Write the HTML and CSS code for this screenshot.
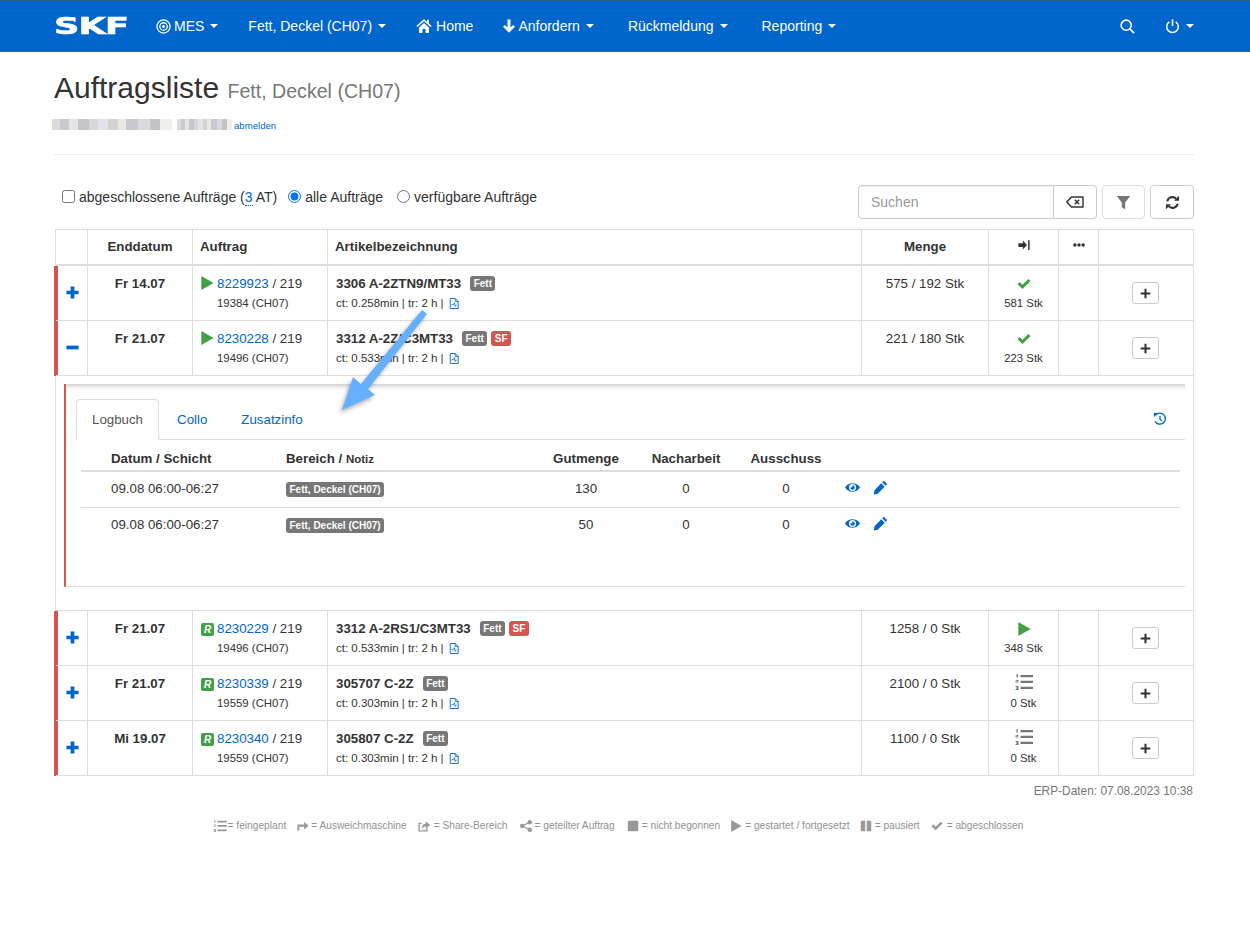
FILE: index.html
```html
<!DOCTYPE html>
<html lang="de">
<head>
    <meta charset="UTF-8">
    <title>Auftragsliste</title>
    <link rel="stylesheet" href="styles.css">
</head>
<body>
    <svg class="icon-defs" width="0" height="0">
        <symbol id="i-target" viewBox="0 0 16 16"><circle cx="8" cy="8" r="7" fill="none" stroke="currentColor" stroke-width="1.4"/><circle cx="8" cy="8" r="4" fill="none" stroke="currentColor" stroke-width="1.4"/><circle cx="8" cy="8" r="1.6" fill="currentColor"/></symbol>
        <symbol id="i-home" viewBox="0 0 16 16"><path d="M8 1 .3 8l1 1.1L8 3.2l6.7 5.9 1-1.1-2.7-2.4V1.800h-2v2.100z"/><path d="M3 9.400 8 5l5 4.400V15H9.500v-4h-3v4H3z"/></symbol>
        <symbol id="i-down" viewBox="0 0 12 14"><path d="M4.500 .5h3v8l2.600-2.600L12 7.800 6 13.800 0 7.800l1.900-1.900L4.500 8.500z"/></symbol>
        <symbol id="i-search" viewBox="0 0 16 16"><circle cx="6.600" cy="6.600" r="5.400" fill="none" stroke="currentColor" stroke-width="1.700"/><path d="M10.500 10.500 15 15" fill="none" stroke="currentColor" stroke-width="2"/></symbol>
        <symbol id="i-power" viewBox="0 0 16 16"><path d="M4.600 3A6.200 6.200 0 1 0 11.400 3" fill="none" stroke="currentColor" stroke-width="1.600"/><path d="M8 .5v7" fill="none" stroke="currentColor" stroke-width="1.700"/></symbol>
        <symbol id="i-filter" viewBox="0 0 16 16"><path d="M.8 1h14.400L9.800 8v7.500L6.200 13V8z"/></symbol>
        <symbol id="i-refresh" viewBox="0 0 16 16"><path d="M2.400 6.600A5.800 5.800 0 0 1 12 3.900" fill="none" stroke="currentColor" stroke-width="2.200"/><path d="M9.600 6.200H15V.8z"/><path d="M13.600 9.400A5.800 5.800 0 0 1 4 12.100" fill="none" stroke="currentColor" stroke-width="2.200"/><path d="M6.400 9.800H1v5.400z"/></symbol>
        <symbol id="i-clear" viewBox="0 0 18 14"><path d="M5.500 2h11.500v10H5.500L.8 7z" fill="none" stroke="currentColor" stroke-width="1.400"/><path d="m8.800 4.800 4.400 4.400m0-4.400-4.400 4.400" fill="none" stroke="currentColor" stroke-width="1.500"/></symbol>
        <symbol id="i-login" viewBox="0 0 16 16"><path d="M.5 5.500h6V2L12 8l-5.500 6v-3.500h-6z"/><path d="M13.500 1.500h2v13h-2z"/></symbol>
        <symbol id="i-dots" viewBox="0 0 16 16"><circle cx="2.500" cy="8" r="2.300"/><circle cx="8" cy="8" r="2.300"/><circle cx="13.500" cy="8" r="2.300"/></symbol>
        <symbol id="i-plus" viewBox="0 0 16 16"><path d="M5.700 .5h4.600v5.200h5.200v4.600h-5.200v5.200H5.700v-5.200H.5V5.700h5.200z"/></symbol>
        <symbol id="i-plus-thin" viewBox="0 0 16 16"><path d="M6.500 1h3v5.500H15v3H9.500V15h-3V9.500H1v-3h5.500z"/></symbol>
        <symbol id="i-minus" viewBox="0 0 16 16"><path d="M.5 5.700h15v4.600H.5z"/></symbol>
        <symbol id="i-play" viewBox="0 0 16 16"><path d="M1.500 0 15.500 8l-14 8z"/></symbol>
        <symbol id="i-check" viewBox="0 0 16 16"><path d="M.6 8.200 3 5.800l3.200 3.100L13 2.400l2.400 2.400L6.200 13.800z"/></symbol>
        <symbol id="i-list" viewBox="0 0 18 16"><path d="M5.500 1h12.500v2.300H5.500zM5.500 6.800h12.500v2.300H5.500zM5.500 12.700h12.500V15H5.500z"/><path d="M1.500 0h1.300v3.500H1.500zM.5 6h3v1H1.800v.6h1.700v1H.5V7.200h1.700v-.4H.5zM.5 12h3v4h-3v-1h1.700v-.5H1v-.9h1.200V13H.5z"/></symbol>
        <symbol id="i-eye" viewBox="0 0 16 16"><path fill-rule="evenodd" d="M0 8c3.500-6 12.500-6 16 0-3.500 6-12.500 6-16 0zm8-3.800a3.800 3.800 0 1 0 0 7.600 3.800 3.800 0 0 0 0-7.600z"/><path d="M8 5.600a2.400 2.400 0 1 1-2.400 2.400c1 .4 2.800-.6 2.400-2.400z"/></symbol>
        <symbol id="i-pencil" viewBox="0 0 16 16"><path d="M11.500.8 15.200 4.500 13.500 6.200 9.800 2.500zM8.800 3.500l3.700 3.700-7.500 7.500L.8 15.500l.8-4.500z"/></symbol>
        <symbol id="i-history" viewBox="0 0 16 16"><path d="M3 3.600A6.300 6.300 0 1 1 2.300 10.500" fill="none" stroke="currentColor" stroke-width="1.500"/><path d="M.8 1.200 5.600 1.200 1.200 5.800z"/><path d="M8 4.500v4l2.500 1.500" fill="none" stroke="currentColor" stroke-width="1.500"/></symbol>
        <symbol id="i-doc" viewBox="0 0 12 14"><path d="M1.500 1h6l3.500 3.500v8.500H1.500z" fill="none" stroke="currentColor" stroke-width="1.100"/><path d="M7.500 1v3.500H11M3 8.500h2l1.500-2.500 1 4.500L9 8.500" fill="none" stroke="currentColor"/></symbol>
        <symbol id="i-reroute" viewBox="0 0 16 16"><path d="M.5 14V6h9V2.500L15.500 7.500 9.500 12.500V9H3v5z"/></symbol>
        <symbol id="i-sharebox" viewBox="0 0 16 16"><path d="M12 11v3.500H1.500V4.500H5" fill="none" stroke="currentColor" stroke-width="1.800"/><path d="M5 11c0-4 2-6 5.500-6V1.500L16 6.500l-5.500 5V8.500C8 8.500 6.500 9 5 11z"/></symbol>
        <symbol id="i-sharealt" viewBox="0 0 16 16"><circle cx="3" cy="8" r="3"/><circle cx="13" cy="3" r="3"/><circle cx="13" cy="13" r="3"/><path d="M3 8 13 3M3 8l10 5" fill="none" stroke="currentColor" stroke-width="1.500"/></symbol>
        <symbol id="i-stop" viewBox="0 0 16 16"><rect x="1" y="1" width="14" height="14" rx="1.500"/></symbol>
        <symbol id="i-pause" viewBox="0 0 16 16"><rect x="1" y="1" width="6" height="14" rx="1"/><rect x="9" y="1" width="6" height="14" rx="1"/></symbol>
    </svg>

    <nav class="navbar">
        <span class="brand">SKF</span>
        <ul class="nav-list">
            <li class="nav-item"><svg class="nav-icon nav-icon-target"><use href="#i-target"/></svg>MES<span class="caret"></span></li>
            <li class="nav-item">Fett, Deckel (CH07)<span class="caret"></span></li>
            <li class="nav-item"><svg class="nav-icon nav-icon-home"><use href="#i-home"/></svg>Home</li>
            <li class="nav-item"><svg class="nav-icon nav-icon-down"><use href="#i-down"/></svg>Anfordern<span class="caret"></span></li>
            <li class="nav-item nav-item-wide">Rückmeldung<span class="caret"></span></li>
            <li class="nav-item nav-item-wide">Reporting<span class="caret"></span></li>
        </ul>
        <ul class="nav-list nav-right">
            <li class="nav-item"><svg class="nav-icon nav-icon-solo"><use href="#i-search"/></svg></li>
            <li class="nav-item"><svg class="nav-icon nav-icon-solo"><use href="#i-power"/></svg><span class="caret"></span></li>
        </ul>
    </nav>

    <main class="container">
        <h1 class="page-title">Auftragsliste <small>Fett, Deckel (CH07)</small></h1>
        <div class="user-line">
            <span class="blurred blurred-a"></span><span class="blurred blurred-b"></span>
            <a class="logout" href="#">abmelden</a>
        </div>
        <hr class="divider">

        <div class="toolbar">
            <form class="filters">
                <label class="filter"><input type="checkbox"><span>abgeschlossene Aufträge (<abbr class="at-count">3</abbr> AT)</span></label>
                <label class="filter"><input type="radio" name="scope" checked><span>alle Aufträge</span></label>
                <label class="filter filter-last"><input type="radio" name="scope"><span>verfügbare Aufträge</span></label>
            </form>
            <div class="tools">
                <div class="search-group">
                    <input class="search-input" type="text" placeholder="Suchen">
                    <button class="btn btn-clear" type="button"><svg class="icon-clear"><use href="#i-clear"/></svg></button>
                </div>
                <button class="btn btn-tool btn-filter" type="button"><svg class="icon-15"><use href="#i-filter"/></svg></button>
                <button class="btn btn-tool" type="button"><svg class="icon-15"><use href="#i-refresh"/></svg></button>
            </div>
        </div>

        <table class="orders">
            <colgroup>
                <col class="c-toggle"><col class="c-date"><col class="c-order"><col class="c-article"><col class="c-qty"><col class="c-state"><col class="c-more"><col class="c-add">
            </colgroup>
            <thead>
                <tr>
                    <th></th>
                    <th>Enddatum</th>
                    <th class="left">Auftrag</th>
                    <th class="left">Artikelbezeichnung</th>
                    <th>Menge</th>
                    <th><svg class="icon-12"><use href="#i-login"/></svg></th>
                    <th><svg class="icon-12"><use href="#i-dots"/></svg></th>
                    <th></th>
                </tr>
            </thead>
            <tbody>
                <tr>
                    <td class="toggle"><svg class="icon-toggle"><use href="#i-plus"/></svg></td>
                    <td class="date">Fr 14.07</td>
                    <td class="order"><svg class="icon-play"><use href="#i-play"/></svg><a href="#">8229923</a> / 219<div class="sub">19384 (CH07)</div></td>
                    <td class="article"><b>3306 A-2ZTN9/MT33</b><span class="label label-grey">Fett</span><div class="meta">ct: 0.258min | tr: 2 h | <svg class="icon-doc"><use href="#i-doc"/></svg></div></td>
                    <td class="qty">575 / 192 Stk</td>
                    <td class="state"><svg class="icon-check"><use href="#i-check"/></svg><div class="sub">581 Stk</div></td>
                    <td></td>
                    <td class="add"><button class="btn btn-add" type="button"><svg class="icon-11"><use href="#i-plus-thin"/></svg></button></td>
                </tr>
                <tr>
                    <td class="toggle"><svg class="icon-toggle"><use href="#i-minus"/></svg></td>
                    <td class="date">Fr 21.07</td>
                    <td class="order"><svg class="icon-play"><use href="#i-play"/></svg><a href="#">8230228</a> / 219<div class="sub">19496 (CH07)</div></td>
                    <td class="article"><b>3312 A-2Z/C3MT33</b><span class="label label-grey">Fett</span><span class="label label-red">SF</span><div class="meta">ct: 0.533min | tr: 2 h | <svg class="icon-doc"><use href="#i-doc"/></svg></div></td>
                    <td class="qty">221 / 180 Stk</td>
                    <td class="state"><svg class="icon-check"><use href="#i-check"/></svg><div class="sub">223 Stk</div></td>
                    <td></td>
                    <td class="add"><button class="btn btn-add" type="button"><svg class="icon-11"><use href="#i-plus-thin"/></svg></button></td>
                </tr>
                <tr class="detail-row">
                    <td colspan="8">
                        <div class="detail">
                            <div class="tabs">
                                <a class="tab tab-active" href="#">Logbuch</a>
                                <a class="tab" href="#">Collo</a>
                                <a class="tab" href="#">Zusatzinfo</a>
                                <svg class="icon-history"><use href="#i-history"/></svg>
                            </div>
                            <table class="log">
                                <colgroup>
                                    <col class="l-date"><col class="l-area"><col class="l-num"><col class="l-num"><col class="l-num"><col>
                                </colgroup>
                                <thead>
                                    <tr>
                                        <th class="log-date">Datum / Schicht</th>
                                        <th class="left">Bereich / <span class="note">Notiz</span></th>
                                        <th>Gutmenge</th>
                                        <th>Nacharbeit</th>
                                        <th>Ausschuss</th>
                                        <th></th>
                                    </tr>
                                </thead>
                                <tbody>
                                    <tr>
                                        <td class="log-date">09.08 06:00-06:27</td>
                                        <td><span class="label label-grey label-area">Fett, Deckel (CH07)</span></td>
                                        <td class="num">130</td>
                                        <td class="num">0</td>
                                        <td class="num">0</td>
                                        <td class="actions"><svg class="icon-15"><use href="#i-eye"/></svg><svg class="icon-15"><use href="#i-pencil"/></svg></td>
                                    </tr>
                                    <tr>
                                        <td class="log-date">09.08 06:00-06:27</td>
                                        <td><span class="label label-grey label-area">Fett, Deckel (CH07)</span></td>
                                        <td class="num">50</td>
                                        <td class="num">0</td>
                                        <td class="num">0</td>
                                        <td class="actions"><svg class="icon-15"><use href="#i-eye"/></svg><svg class="icon-15"><use href="#i-pencil"/></svg></td>
                                    </tr>
                                </tbody>
                            </table>
                        </div>
                    </td>
                </tr>
                <tr>
                    <td class="toggle"><svg class="icon-toggle"><use href="#i-plus"/></svg></td>
                    <td class="date">Fr 21.07</td>
                    <td class="order"><span class="badge-r">R</span><a href="#">8230229</a> / 219<div class="sub">19496 (CH07)</div></td>
                    <td class="article"><b>3312 A-2RS1/C3MT33</b><span class="label label-grey">Fett</span><span class="label label-red">SF</span><div class="meta">ct: 0.533min | tr: 2 h | <svg class="icon-doc"><use href="#i-doc"/></svg></div></td>
                    <td class="qty">1258 / 0 Stk</td>
                    <td class="state"><svg class="icon-check"><use href="#i-play"/></svg><div class="sub">348 Stk</div></td>
                    <td></td>
                    <td class="add"><button class="btn btn-add" type="button"><svg class="icon-11"><use href="#i-plus-thin"/></svg></button></td>
                </tr>
                <tr>
                    <td class="toggle"><svg class="icon-toggle"><use href="#i-plus"/></svg></td>
                    <td class="date">Fr 21.07</td>
                    <td class="order"><span class="badge-r">R</span><a href="#">8230339</a> / 219<div class="sub">19559 (CH07)</div></td>
                    <td class="article"><b>305707 C-2Z</b><span class="label label-grey">Fett</span><div class="meta">ct: 0.303min | tr: 2 h | <svg class="icon-doc"><use href="#i-doc"/></svg></div></td>
                    <td class="qty">2100 / 0 Stk</td>
                    <td class="state"><svg class="icon-list"><use href="#i-list"/></svg><div class="sub">0 Stk</div></td>
                    <td></td>
                    <td class="add"><button class="btn btn-add" type="button"><svg class="icon-11"><use href="#i-plus-thin"/></svg></button></td>
                </tr>
                <tr>
                    <td class="toggle"><svg class="icon-toggle"><use href="#i-plus"/></svg></td>
                    <td class="date">Mi 19.07</td>
                    <td class="order"><span class="badge-r">R</span><a href="#">8230340</a> / 219<div class="sub">19559 (CH07)</div></td>
                    <td class="article"><b>305807 C-2Z</b><span class="label label-grey">Fett</span><div class="meta">ct: 0.303min | tr: 2 h | <svg class="icon-doc"><use href="#i-doc"/></svg></div></td>
                    <td class="qty">1100 / 0 Stk</td>
                    <td class="state"><svg class="icon-list"><use href="#i-list"/></svg><div class="sub">0 Stk</div></td>
                    <td></td>
                    <td class="add"><button class="btn btn-add" type="button"><svg class="icon-11"><use href="#i-plus-thin"/></svg></button></td>
                </tr>
            </tbody>
        </table>

        <p class="erp-date">ERP-Daten: 07.08.2023 10:38</p>

        <ul class="legend">
            <li><svg class="legend-icon legend-wide"><use href="#i-list"/></svg>= feingeplant</li>
            <li><svg class="legend-icon legend-wide"><use href="#i-reroute"/></svg>= Ausweichmaschine</li>
            <li><svg class="legend-icon legend-wide"><use href="#i-sharebox"/></svg>= Share-Bereich</li>
            <li><svg class="legend-icon"><use href="#i-sharealt"/></svg>= geteilter Auftrag</li>
            <li><svg class="legend-icon"><use href="#i-stop"/></svg>= nicht begonnen</li>
            <li><svg class="legend-icon"><use href="#i-play"/></svg>= gestartet / fortgesetzt</li>
            <li><svg class="legend-icon"><use href="#i-pause"/></svg>= pausiert</li>
            <li><svg class="legend-icon legend-wide"><use href="#i-check"/></svg>= abgeschlossen</li>
        </ul>
    </main>

    <svg class="callout" viewBox="0 0 100 115" width="100" height="115">
        <polygon points="7,105 18,72 26,79 87,5 92,9 33,84 40,90"/>
    </svg>
</body>
</html>
```

FILE: styles.css
```css
* {
    box-sizing: border-box;
}
html, body {
    margin: 0;
    padding: 0;
}
body {
    font-family: "Liberation Sans", Arial, sans-serif;
    font-size: 14px;
    line-height: 20px;
    color: #333;
    background: #fff;
    min-height: 927px;
}
a {
    color: #0066cc;
    text-decoration: none;
}
svg {
    fill: currentColor;
}
.icon-defs {
    position: absolute;
}

/* navbar */
.navbar {
    display: flex;
    align-items: center;
    height: 52px;
    padding: 0 41px 1px 54px;
    background: #0066cc;
    border-top: 1px solid #34597f;
    color: #fff;
}
.brand {
    display: inline-block;
    width: 50px;
    margin-right: 37px;
    font-family: "DejaVu Sans", sans-serif;
    font-weight: bold;
    font-size: 23px;
    line-height: 20px;
    letter-spacing: -.5px;
    -webkit-text-stroke: .6px #fff;
    transform: scaleX(1.53);
    transform-origin: left center;
}
.nav-list {
    display: flex;
    align-items: center;
    list-style: none;
    margin: 0;
    padding: 0;
}
.nav-right {
    margin-left: auto;
}
.nav-item {
    display: flex;
    align-items: center;
    padding: 0 15px;
}
.nav-item-wide {
    margin-left: 4px;
}
.nav-icon {
    width: 14px;
    height: 14px;
    margin-right: 3px;
}
.nav-icon-target {
    width: 15px;
    height: 15px;
}
.nav-icon-home {
    width: 16px;
    height: 16px;
    margin-right: 4px;
}
.nav-icon-down {
    width: 12px;
}
.nav-icon-solo {
    width: 15px;
    height: 15px;
    margin-right: 0;
}
.caret {
    width: 0;
    height: 0;
    margin-left: 6px;
    border-top: 4px solid #fff;
    border-left: 4px solid transparent;
    border-right: 4px solid transparent;
}

/* page head */
.container {
    width: 1140px;
    margin-left: 54px;
}
.page-title {
    margin: 19px 0 0;
    font-size: 30px;
    font-weight: 400;
    line-height: 33px;
}
.page-title small {
    font-size: 19.600px;
    color: #777;
}
.user-line {
    display: flex;
    align-items: center;
    height: 14px;
    margin-top: 11px;
}
.blurred {
    height: 11px;
    margin-top: -4px;
    background: linear-gradient(90deg, #dcdcdc 0 7%, #c9cad0 7% 14%, #e4e4e6 14% 22%, #c4c6cc 22% 31%, #d8d8da 31% 38%, #e2e4ea 38% 47%, #d5d3d0 47% 55%, #e8e8e0 55% 62%, #c8c8ce 62% 72%, #dadade 72% 82%, #c4c4c8 82% 90%, #f0efea 90%);
}
.blurred-a {
    width: 120px;
    margin-left: -2px;
    margin-right: 5px;
}
.blurred-b {
    width: 55px;
    margin-right: 2px;
}
.logout {
    font-size: 9.600px;
}
.divider {
    margin: 21px 0 0;
    border: 0;
    border-top: 1px solid #eee;
}

/* filter row */
.toolbar {
    display: flex;
    justify-content: space-between;
    align-items: flex-start;
    margin: 30px 0 10px;
}
.filters {
    display: flex;
    gap: 11px;
    padding: 2px 0 0 8px;
}
.filter {
    display: flex;
    align-items: center;
}
.filter-last {
    margin-left: 3px;
}
.filter input {
    margin: 0 4px 2px 0;
}
.at-count {
    color: #0066cc;
    border-bottom: 1px dotted #0066cc;
}
.tools {
    display: flex;
    gap: 5px;
}
.search-group {
    display: flex;
}
.search-input {
    width: 196px;
    height: 34px;
    padding: 0 12px;
    font: 14px "Liberation Sans", Arial, sans-serif;
    border: 1px solid #ccc;
    border-radius: 4px 0 0 4px;
    box-shadow: inset 0 1px 1px rgba(0, 0, 0, .075);
}
.search-input::placeholder {
    color: #999;
}
.btn {
    display: inline-flex;
    align-items: center;
    justify-content: center;
    padding: 0;
    background: #fff;
    border: 1px solid #ccc;
    border-radius: 4px;
    color: #333;
}
.btn-clear {
    width: 43px;
    height: 34px;
    border-left: 0;
    border-radius: 0 4px 4px 0;
}
.icon-clear {
    width: 18px;
    height: 14px;
}
.btn-tool {
    width: 44px;
    height: 34px;
}
.btn-filter {
    width: 43px;
    border-color: #ddd;
    color: #777;
}
.icon-15 {
    width: 15px;
    height: 15px;
}
.icon-12 {
    width: 12px;
    height: 12px;
}
.icon-11 {
    width: 11px;
    height: 11px;
}

/* orders table */
.orders {
    width: 1139px;
    margin-left: 1px;
    table-layout: fixed;
    border-collapse: separate;
    border-spacing: 0;
    border-top: 1px solid #ddd;
    border-left: 1px solid #ddd;
    font-size: 13.300px;
}
.c-toggle { width: 32px; }
.c-date { width: 105px; }
.c-order { width: 135px; }
.c-article { width: 534px; }
.c-qty { width: 127px; }
.c-state { width: 70px; }
.c-more { width: 40px; }
.c-add { width: 95px; }

.orders > thead > tr > th {
    height: 36px;
    padding: 0 8px;
    text-align: center;
    border-right: 1px solid #ddd;
    border-bottom: 2px solid #ddd;
}
.orders > thead > tr > th.left {
    padding-left: 7px;
    text-align: left;
}
.orders > tbody > tr > td {
    height: 55px;
    padding: 8px;
    vertical-align: top;
    border-right: 1px solid #ddd;
    border-bottom: 1px solid #ddd;
}
.orders > tbody > tr > td.toggle {
    vertical-align: middle;
    text-align: center;
    padding: 0 0 1px 1px;
    box-shadow: -2px 0 0 #d9534f, inset 2px 0 0 #d9534f;
}
.icon-toggle {
    display: block;
    width: 13px;
    height: 13px;
    margin: 0 auto;
    color: #0066cc;
}
.date {
    text-align: center;
    font-weight: bold;
}
.qty {
    text-align: center;
}
.sub {
    font-size: 11.400px;
    line-height: 16px;
    margin-top: 1px;
}
.order .sub {
    padding-left: 16px;
}
.icon-play {
    width: 14px;
    height: 14px;
    margin: 0 3px -2px -1px;
    color: #43a047;
}
.badge-r {
    display: inline-block;
    width: 13px;
    height: 13px;
    margin-right: 3px;
    border-radius: 2px;
    background: #43a047;
    color: #fff;
    font-size: 10px;
    font-style: italic;
    font-weight: bold;
    line-height: 13px;
    text-align: center;
}
.label {
    display: inline-block;
    margin-left: 4px;
    padding: 0 3.500px;
    height: 15px;
    border-radius: 3px;
    color: #fff;
    font-size: 10px;
    font-weight: bold;
    line-height: 15px;
    text-align: center;
    vertical-align: 1px;
}
.article b + .label {
    margin-left: 9px;
}
.label-grey {
    background: #777;
}
.label-red {
    background: #d9534f;
}
.meta {
    font-size: 11.500px;
    line-height: 16px;
    margin-top: 1px;
}
.icon-doc {
    width: 10px;
    height: 13px;
    margin: 0 0 -3px 2px;
    color: #0066cc;
}
.state {
    text-align: center;
}
.icon-check {
    display: block;
    width: 14px;
    height: 14px;
    margin: 3px auto 0;
    color: #43a047;
}
.icon-list {
    display: block;
    width: 18px;
    height: 16px;
    margin: 0 auto;
    color: #777;
}
.state .sub {
    margin-top: 4px;
}
.state .icon-list + .sub {
    margin-top: 5px;
}
.add {
    text-align: center;
}
.orders > tbody > tr > td.add {
    padding: 16px 8px 8px 6px;
}
.btn-add {
    width: 27px;
    height: 22px;
    border-radius: 3px;
}

/* open row */
.orders > tbody > .detail-row > td {
    padding: 8px 8px 23px;
}
.detail {
    height: 203px;
    padding-top: 15px;
    border-left: 2px solid #d9534f;
    border-bottom: 1px solid #ddd;
    box-shadow: inset 0 6px 5px -4px rgba(0, 0, 0, .22);
}
.tabs {
    display: flex;
    align-items: center;
    height: 41px;
    margin-left: 10px;
    border-bottom: 1px solid #ddd;
}
.tab {
    height: 41px;
    padding: 10px 15px;
    margin-right: 2px;
    border: 1px solid transparent;
    border-radius: 4px 4px 0 0;
    line-height: 19px;
}
.tab-active {
    color: #555;
    background: #fff;
    border-color: #ddd #ddd #fff;
}
.icon-history {
    width: 14px;
    height: 14px;
    margin: -1px 18px 0 auto;
    color: #0066cc;
}
.log {
    width: 1099px;
    margin-left: 15px;
    table-layout: fixed;
    border-collapse: collapse;
}
.l-date { width: 197px; }
.l-area { width: 258px; }
.l-num { width: 100px; }
.log th {
    height: 31px;
    padding: 8px 8px 0;
    text-align: center;
    border-bottom: 2px solid #ddd;
}
.log th.left {
    text-align: left;
}
.log th.log-date,
.log td.log-date {
    padding-left: 30px;
    text-align: left;
}
.note {
    font-size: 11.500px;
}
.log td {
    height: 36px;
    padding: 0 8px 1px;
    border-bottom: 1px solid #ddd;
}
.log tr:last-child td {
    border-bottom: 0;
}
.log .num {
    text-align: center;
}
.label-area {
    margin: 0;
    vertical-align: 0;
}
.actions {
    color: #0066cc;
}
.actions svg {
    margin: 2px 13px -2px 0;
}
.actions svg:first-child {
    margin-left: 1px;
}

/* below the table */
.erp-date {
    margin: 5px 0 0;
    padding-right: 1px;
    text-align: right;
    font-size: 11.900px;
    color: #777;
}
.legend {
    display: flex;
    justify-content: center;
    gap: 10px;
    list-style: none;
    margin: 15px 0 0;
    padding: 0 12px 0 0;
    font-size: 10.200px;
    color: #929292;
}
.legend li {
    display: flex;
    align-items: center;
    gap: 3px;
}
.legend li:nth-child(-n+2) {
    gap: 1px;
}
.legend li:nth-child(3),
.legend li:nth-child(4) {
    margin-right: 2px;
}
.legend-icon {
    width: 12px;
    height: 12px;
    color: #999;
}
.legend-wide {
    width: 14px;
}

/* arrow drawn over the screenshot */
.callout {
    position: absolute;
    left: 335px;
    top: 305px;
    overflow: visible;
    fill: #66b0ff;
    filter: drop-shadow(-2px 3px 2px rgba(0, 0, 0, .3));
}
```
